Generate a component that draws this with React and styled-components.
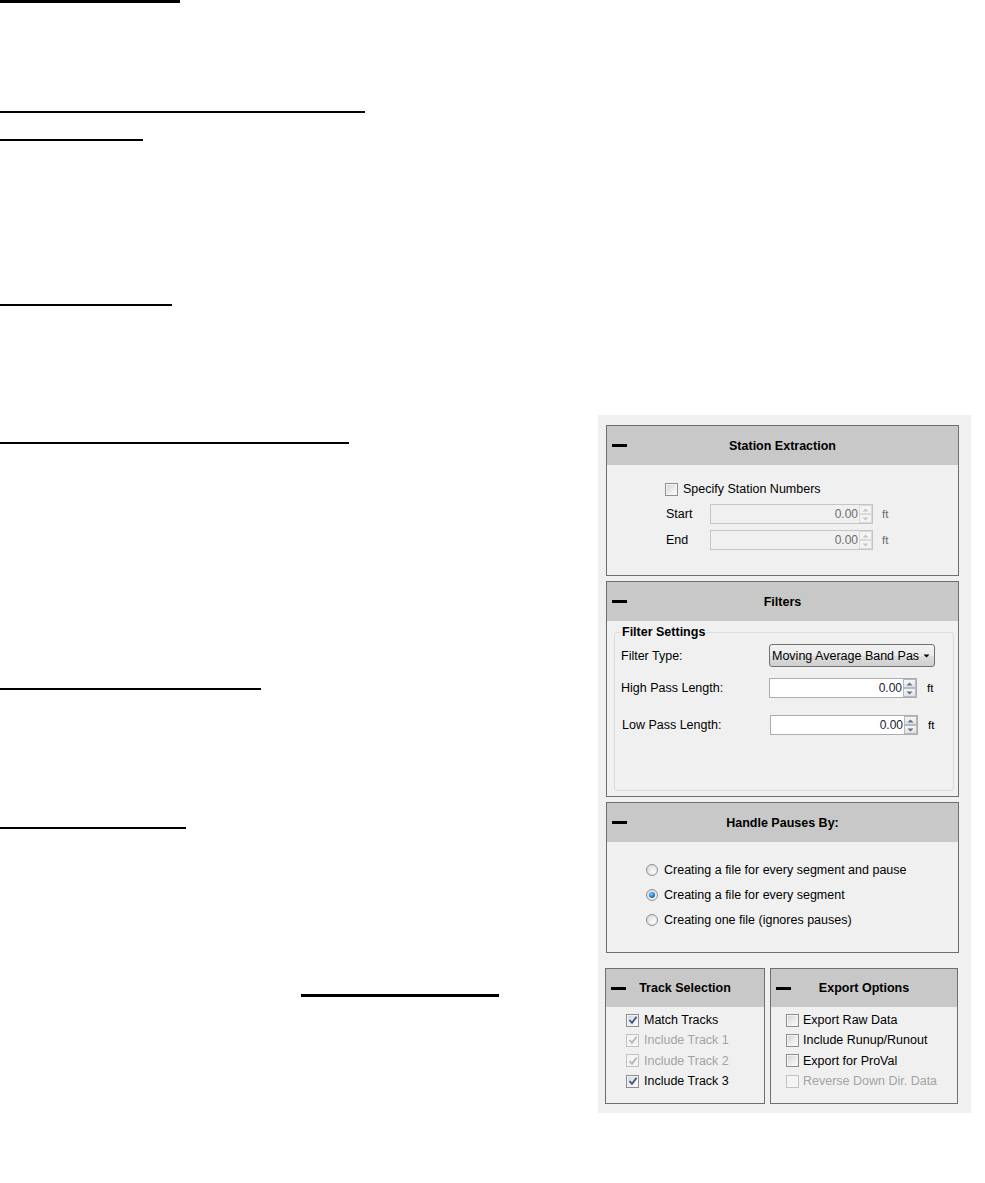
import React from 'react';
import styled, { createGlobalStyle } from 'styled-components';

const GlobalStyle = createGlobalStyle`
  body {
    margin: 0;
    background: #ffffff;
    font-family: "Liberation Sans", Arial, sans-serif;
    color: #000000;
  }
`;

const Page = styled.div`
  display: flex;
  align-items: flex-start;
  width: 985px;
  height: 1183px;
`;

const LeftColumn = styled.div`
  width: 598px;
  flex-shrink: 0;
`;

const Rule = styled.div`
  height: ${p => p.$thick || 2}px;
  width: ${p => p.$width}px;
  margin-top: ${p => p.$gap}px;
  margin-left: ${p => p.$indent || 0}px;
  background: #000000;
`;

const Panel = styled.div`
  width: 373px;
  height: 698px;
  box-sizing: border-box;
  margin-top: 415px;
  padding: 10px 12px 9px 8px;
  background: #f0f0f0;
  display: flex;
  flex-direction: column;
  font-size: 12.5px;
`;

const Section = styled.div`
  height: ${p => p.$height}px;
  width: ${p => p.$width || 353}px;
  box-sizing: border-box;
  border: 1px solid #6e6e6e;
  margin-top: ${p => p.$gap || 0}px;
  display: flex;
  flex-direction: column;
  background: #f0f0f0;
`;

const Header = styled.div`
  height: ${p => p.$height || 39}px;
  flex-shrink: 0;
  background: #c8c8c8;
  display: grid;
  grid-template-columns: 24px 1fr 24px;
  align-items: center;
  padding: 0 5px;
`;

const Minus = styled.span`
  width: 15px;
  height: 3px;
  background: #000000;
`;

const Title = styled.span`
  font-weight: bold;
  font-size: 12.5px;
  text-align: center;
  white-space: nowrap;
`;

const SectionBody = styled.div`
  flex: 1;
  display: flex;
  flex-direction: column;
  padding: ${p => p.$pad};
`;

const Row = styled.div`
  display: flex;
  align-items: center;
  height: ${p => p.$height || 16}px;
  margin-top: ${p => p.$gap || 0}px;
  color: ${p => (p.$disabled ? '#a3a3a3' : '#000000')};
  white-space: nowrap;
`;

const Label = styled.span`
  width: ${p => p.$width}px;
  margin-left: ${p => p.$indent || 0}px;
  flex-shrink: 0;
`;

const Unit = styled.span`
  margin-left: ${p => p.$gap || 9}px;
  color: ${p => (p.$disabled ? '#6d6d6d' : '#000000')};
  font-size: 11.5px;
`;

const CheckBox = styled.span`
  width: 13px;
  height: 13px;
  box-sizing: border-box;
  flex-shrink: 0;
  margin-right: ${p => p.$gap || 5}px;
  border: 1px solid ${p => (p.$disabled ? '#c2c2c2' : '#8e8f8f')};
  background: ${p =>
    p.$disabled
      ? '#f4f4f4'
      : 'linear-gradient(135deg, #d2d2d2 0%, #eeeeee 60%, #fbfbfb 100%)'};
  box-shadow: inset 0 0 0 1px #f4f4f4;
  display: flex;
  align-items: center;
  justify-content: center;
`;

const Radio = styled.span`
  width: 12px;
  height: 12px;
  box-sizing: border-box;
  flex-shrink: 0;
  margin-right: 6px;
  border-radius: 50%;
  border: 1px solid #8e8f8f;
  background: radial-gradient(circle at 65% 65%, #fbfbfb 0%, #e6e6e6 55%, #cfcfcf 100%);
  display: flex;
  align-items: center;
  justify-content: center;
`;

const RadioDot = styled.span`
  width: 6px;
  height: 6px;
  border-radius: 50%;
  background: radial-gradient(circle at 40% 35%, #8fd0ff 0%, #2a86d0 45%, #0d3f73 100%);
`;

const SpinBox = styled.div`
  width: ${p => p.$width}px;
  height: 20px;
  box-sizing: border-box;
  border: 1px solid ${p => (p.$disabled ? '#c5c5c5' : '#abadb3')};
  background: ${p => (p.$disabled ? '#f0f0f0' : '#ffffff')};
  display: flex;
  flex-shrink: 0;
`;

const SpinValue = styled.span`
  flex: 1;
  text-align: right;
  padding-right: 1px;
  line-height: 18px;
  font-size: 12px;
  color: ${p => (p.$disabled ? '#6d6d6d' : '#1a1a3a')};
`;

const SpinButtons = styled.div`
  width: 13px;
  display: flex;
  flex-direction: column;
`;

const SpinButton = styled.span`
  flex: 1;
  border: 1px solid ${p => (p.$disabled ? '#dadada' : '#b9b9b9')};
  background: ${p => (p.$disabled ? '#f4f4f4' : 'linear-gradient(#f6f6f6, #e2e2e2)')};
  display: flex;
  align-items: center;
  justify-content: center;
`;

const Dropdown = styled.div`
  width: 166px;
  height: 23px;
  box-sizing: border-box;
  border: 1px solid #707070;
  border-radius: 3px;
  background: linear-gradient(#f2f2f2 0%, #ebebeb 50%, #dddddd 51%, #cfcfcf 100%);
  display: flex;
  align-items: center;
  padding: 0 2px 0 2px;
  flex-shrink: 0;
`;

const DropText = styled.span`
  flex: 1;
  white-space: nowrap;
  font-size: 12.5px;
`;

const DropArrow = styled.span`
  width: 10px;
  display: flex;
  justify-content: center;
  margin-right: 1px;
`;

const GroupBox = styled.fieldset`
  flex: 1;
  margin: 0;
  padding: 4px 0 0 6px;
  border: 1px solid #d9dcdf;
  border-radius: 3px;
  min-width: 0;
`;

const Legend = styled.legend`
  padding: 0 1px;
  font-weight: bold;
  font-size: 12.5px;
  line-height: 15px;
`;

const BottomRow = styled.div`
  display: flex;
  gap: 5px;
  margin-top: 15px;
  margin-left: -1px;
`;

const Arrow = ({ up, color }) => (
  <svg width="7" height="4" viewBox="0 0 7 4">
    <path d={up ? 'M0.5 3.5 L3.5 0.5 L6.5 3.5 Z' : 'M0.5 0.5 L3.5 3.5 L6.5 0.5 Z'} fill={color} />
  </svg>
);

const Check = ({ checked, disabled, gap }) => (
  <CheckBox $disabled={disabled} $gap={gap}>
    {checked && (
      <svg width="10" height="10" viewBox="0 0 10 10">
        <path
          d="M1.5 5 L4 7.8 L8.6 1.8"
          fill="none"
          stroke={disabled ? '#b5b5b5' : '#3d5288'}
          strokeWidth="1.8"
        />
      </svg>
    )}
  </CheckBox>
);

const Spinner = ({ width, disabled }) => {
  const arrow = disabled ? '#c6c6c6' : '#5a6f94';
  return (
    <SpinBox $width={width} $disabled={disabled}>
      <SpinValue $disabled={disabled}>0.00</SpinValue>
      <SpinButtons>
        <SpinButton $disabled={disabled}><Arrow up color={arrow} /></SpinButton>
        <SpinButton $disabled={disabled}><Arrow color={arrow} /></SpinButton>
      </SpinButtons>
    </SpinBox>
  );
};

const SectionHead = ({ title, height }) => (
  <Header $height={height}>
    <Minus />
    <Title>{title}</Title>
    <span />
  </Header>
);

const rules = [
  { width: 180, gap: 0, thick: 3 },
  { width: 365, gap: 108 },
  { width: 143, gap: 26 },
  { width: 172, gap: 163 },
  { width: 349, gap: 136 },
  { width: 261, gap: 244 },
  { width: 186, gap: 137 },
  { width: 198, gap: 165, indent: 301, thick: 3 },
];

const pauseOptions = [
  'Creating a file for every segment and pause',
  'Creating a file for every segment',
  'Creating one file (ignores pauses)',
];

const tracks = [
  { label: 'Match Tracks', checked: true },
  { label: 'Include Track 1', checked: true, disabled: true },
  { label: 'Include Track 2', checked: true, disabled: true },
  { label: 'Include Track 3', checked: true },
];

const exportOptions = [
  { label: 'Export Raw Data' },
  { label: 'Include Runup/Runout' },
  { label: 'Export for ProVal' },
  { label: 'Reverse Down Dir. Data', disabled: true },
];

const App = () => {
  return (
    <>
      <GlobalStyle />
      <Page>
        <LeftColumn>
          {rules.map((r, i) => (
            <Rule key={i} $width={r.width} $gap={r.gap} $indent={r.indent} $thick={r.thick} />
          ))}
        </LeftColumn>

        <Panel>
          <Section $height={151}>
            <SectionHead title="Station Extraction" />
            <SectionBody $pad="16px 0 0 58px">
              <Row>
                <Check />
                Specify Station Numbers
              </Row>
              <Row $height={20} $gap={7}>
                <Label $width={44} $indent={1}>Start</Label>
                <Spinner width={163} disabled />
                <Unit $disabled>ft</Unit>
              </Row>
              <Row $height={20} $gap={6}>
                <Label $width={44} $indent={1}>End</Label>
                <Spinner width={163} disabled />
                <Unit $disabled>ft</Unit>
              </Row>
            </SectionBody>
          </Section>

          <Section $height={216} $gap={5}>
            <SectionHead title="Filters" />
            <SectionBody $pad="4px 4px 5px 7px">
              <GroupBox>
                <Legend>Filter Settings</Legend>
                <Row $height={23}>
                  <Label $width={148}>Filter Type:</Label>
                  <Dropdown>
                    <DropText>Moving Average Band Pas</DropText>
                    <DropArrow><Arrow color="#000000" /></DropArrow>
                  </Dropdown>
                </Row>
                <Row $height={20} $gap={11}>
                  <Label $width={148}>High Pass Length:</Label>
                  <Spinner width={148} />
                  <Unit $gap={10}>ft</Unit>
                </Row>
                <Row $height={20} $gap={17}>
                  <Label $width={148} $indent={1}>Low Pass Length:</Label>
                  <Spinner width={148} />
                  <Unit $gap={10}>ft</Unit>
                </Row>
              </GroupBox>
            </SectionBody>
          </Section>

          <Section $height={151} $gap={5}>
            <SectionHead title="Handle Pauses By:" />
            <SectionBody $pad="20px 0 0 39px">
              {pauseOptions.map((label, i) => (
                <Row key={label} $gap={i ? 9 : 0}>
                  <Radio>{i === 1 && <RadioDot />}</Radio>
                  {label}
                </Row>
              ))}
            </SectionBody>
          </Section>

          <BottomRow>
            <Section $height={136} $width={160}>
              <SectionHead title="Track Selection" height={38} />
              <SectionBody $pad="3px 0 0 20px">
                {tracks.map(t => (
                  <Row key={t.label} $height={20.3} $disabled={t.disabled}>
                    <Check checked={t.checked} disabled={t.disabled} gap={5} />
                    {t.label}
                  </Row>
                ))}
              </SectionBody>
            </Section>
            <Section $height={136} $width={188}>
              <SectionHead title="Export Options" height={38} />
              <SectionBody $pad="3px 0 0 15px">
                {exportOptions.map(o => (
                  <Row key={o.label} $height={20.3} $disabled={o.disabled}>
                    <Check disabled={o.disabled} gap={4} />
                    {o.label}
                  </Row>
                ))}
              </SectionBody>
            </Section>
          </BottomRow>
        </Panel>
      </Page>
    </>
  );
};

export default App;
